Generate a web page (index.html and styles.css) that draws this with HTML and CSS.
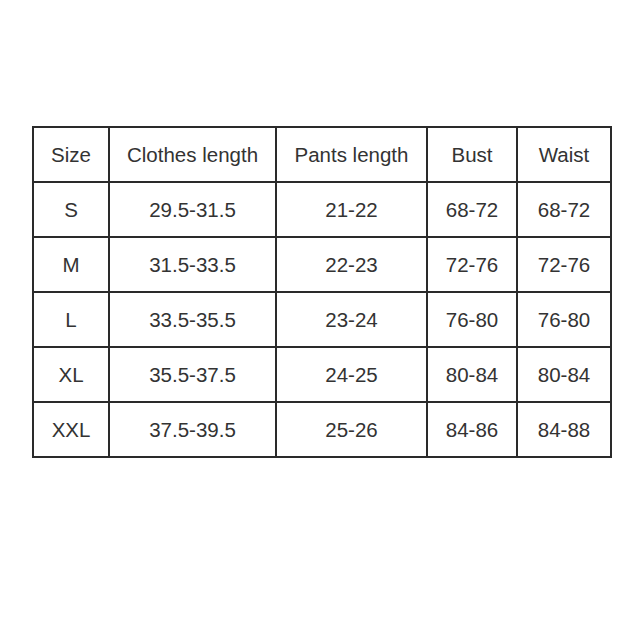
FILE: index.html
```html
<!DOCTYPE html>
<html>
<head>
<meta charset="utf-8">
<link rel="stylesheet" href="styles.css">
</head>
<body>
<table class="size-table">
<colgroup>
<col class="c1"><col class="c2"><col class="c3"><col class="c4"><col class="c5">
</colgroup>
<tr><td>Size</td><td>Clothes length</td><td>Pants length</td><td>Bust</td><td>Waist</td></tr>
<tr><td>S</td><td>29.5-31.5</td><td>21-22</td><td>68-72</td><td>68-72</td></tr>
<tr><td>M</td><td>31.5-33.5</td><td>22-23</td><td>72-76</td><td>72-76</td></tr>
<tr><td>L</td><td>33.5-35.5</td><td>23-24</td><td>76-80</td><td>76-80</td></tr>
<tr><td>XL</td><td>35.5-37.5</td><td>24-25</td><td>80-84</td><td>80-84</td></tr>
<tr><td>XXL</td><td>37.5-39.5</td><td>25-26</td><td>84-86</td><td>84-88</td></tr>
</table>
</body>
</html>
```
FILE: styles.css
```css
html, body {
  margin: 0;
  padding: 0;
  background: #ffffff;
}
body {
  padding-top: 126px;
  padding-left: 32px;
}
.size-table {
  border-collapse: collapse;
  table-layout: fixed;
  width: 578px;
  font-family: "Liberation Sans", Arial, sans-serif;
  font-size: 20.5px;
  color: #333333;
}
.c1 { width: 76px; }
.c2 { width: 167px; }
.c3 { width: 151px; }
.c4 { width: 90px; }
.c5 { width: 94px; }
.size-table td {
  border: 2px solid #2a2a2a;
  height: 55px;
  padding: 0;
  text-align: center;
  vertical-align: middle;
  box-sizing: border-box;
}
```
